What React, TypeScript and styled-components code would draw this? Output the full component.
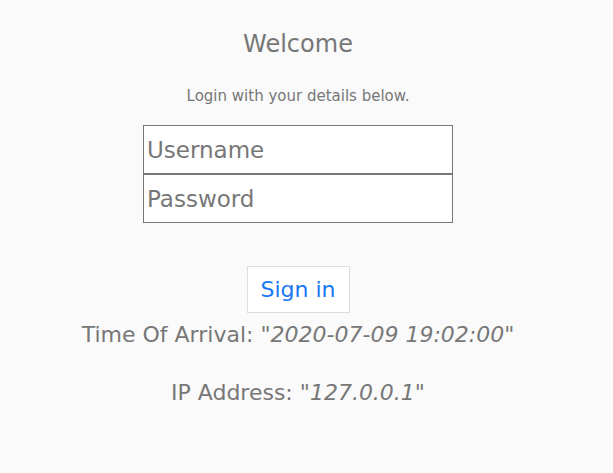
import styled, { createGlobalStyle } from "styled-components";

const GlobalStyle = createGlobalStyle`
  html, body {
    margin: 0;
    padding: 0;
    background: #fafafa;
  }
  body {
    font-family: "DejaVu Sans", "Noto Sans", sans-serif;
    color: #777;
  }
`;

const Page = styled.div`
  width: 596px;
  display: flex;
  flex-direction: column;
  align-items: center;
  text-align: center;
`;

const Title = styled.h1`
  margin: 30px 0 0;
  font-size: 24px;
  line-height: 28px;
  font-weight: 400;
`;

const Subtitle = styled.p`
  margin: 29px 0 0;
  font-size: 15px;
  line-height: 18px;
`;

const Form = styled.form`
  margin-top: 20px;
  display: flex;
  flex-direction: column;
  align-items: center;
`;

const Field = styled.input`
  box-sizing: border-box;
  width: 310px;
  height: 49px;
  margin: 0;
  padding: 0 3px;
  border: 1px solid #777;
  background: #fff;
  font-family: inherit;
  font-size: 23px;
  color: #555;
  outline: none;

  &::placeholder {
    color: #777;
  }
`;

const SignIn = styled.button`
  margin-top: 43px;
  box-sizing: border-box;
  width: 103px;
  height: 47px;
  border: 1px solid #ddd;
  background: #fff;
  color: #1877f2;
  font-family: inherit;
  font-size: 22px;
  cursor: pointer;
`;

const Info = styled.p<{ $gap: number }>`
  margin: ${(p) => p.$gap}px 0 0;
  font-size: 22px;
  line-height: 28px;

  em {
    font-style: italic;
  }
`;

export default function App() {
  return (
    <>
      <GlobalStyle />
      <Page>
        <Title>Welcome</Title>
        <Subtitle>Login with your details below.</Subtitle>
        <Form onSubmit={(e) => e.preventDefault()}>
          <Field type="text" placeholder="Username" />
          <Field type="password" placeholder="Password" />
          <SignIn type="submit">Sign in</SignIn>
        </Form>
        <Info $gap={8}>
          Time Of Arrival: "<em>2020-07-09 19:02:00</em>"
        </Info>
        <Info $gap={30}>
          IP Address: "<em>127.0.0.1</em>"
        </Info>
      </Page>
    </>
  );
}
